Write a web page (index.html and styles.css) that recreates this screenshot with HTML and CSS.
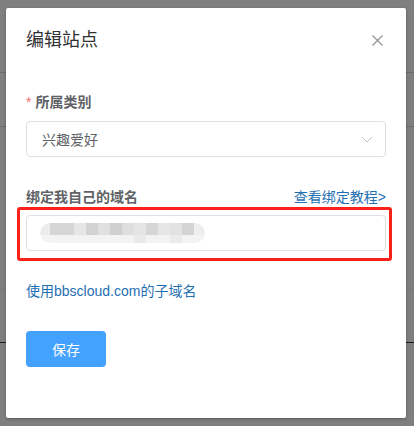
FILE: index.html
```html
<!DOCTYPE html>
<html lang="zh-CN">
<head>
<meta charset="utf-8">
<title>编辑站点</title>
<link rel="stylesheet" href="styles.css">
</head>
<body>
<div class="modal">
  <div class="header">
    <span class="title">编辑站点</span>
    <svg class="close" width="11" height="11" viewBox="0 0 11 11"><path d="M0.5 0.5L10.5 10.5M10.5 0.5L0.5 10.5" stroke="#909399" stroke-width="1.2" fill="none"/></svg>
  </div>
  <div class="body">
    <div class="label"><span class="req">*</span>所属类别</div>
    <div class="select">
      <span class="select-text">兴趣爱好</span>
      <svg class="chev" width="12" height="7" viewBox="0 0 12 7"><polyline points="1,1 6,6 11,1" stroke="#c0c4cc" stroke-width="1" fill="none"/></svg>
    </div>
    <div class="label-row">
      <span class="label2">绑定我自己的域名</span>
      <a class="link" href="#">查看绑定教程&gt;</a>
    </div>
    <div class="domain-wrap">
      <div class="input">
        <div class="mosaic">
          <div class="mrow top"></div>
          <div class="mrow bottom"></div>
        </div>
      </div>
      <div class="annot"></div>
    </div>
    <a class="sub-link" href="#">使用bbscloud.com的子域名</a>
    <button class="save">保存</button>
  </div>
</div>
</body>
</html>
```

FILE: styles.css
```css
html, body {
  height: 100%;
}
body {
  margin: 0;
  font-family: "Liberation Sans", "Noto Sans CJK SC", sans-serif;
  background:
    linear-gradient(#6c6c6c, #6c6c6c) 0 72px / 100% 1px no-repeat,
    linear-gradient(#6c6c6c, #6c6c6c) 0 126px / 100% 1px no-repeat,
    linear-gradient(#777777, #777777) 0 289px / 100% 1px no-repeat,
    linear-gradient(#1e1e1e, #1e1e1e) 0 342px / 100% 1px no-repeat,
    #7f7f7f;
  overflow: hidden;
}
.modal {
  margin: 8px 0 0 6px;
  width: 400px;
  height: 410px;
  background: #fff;
  border-radius: 2px;
  box-shadow: 0 1px 3px rgba(0,0,0,.3);
  box-sizing: border-box;
  padding: 20px 20px 0 20px;
}
.header {
  display: flex;
  justify-content: space-between;
  align-items: center;
  height: 24px;
}
.title {
  font-size: 18px;
  line-height: 24px;
  color: #303133;
}
.close {
  margin-right: 3px;
  margin-top: 1px;
}
.body {
  padding-top: 40px;
}
.label {
  font-size: 14px;
  line-height: 20px;
  color: #606266;
  font-weight: 600;
}
.req {
  color: #f56c6c;
  margin-right: 4px;
  font-weight: 400;
}
.select {
  margin-top: 9px;
  height: 36px;
  border: 1px solid #dcdfe6;
  border-radius: 4px;
  box-sizing: border-box;
  display: flex;
  align-items: center;
  justify-content: space-between;
  padding: 0 12px 0 15px;
}
.select-text {
  font-size: 14px;
  color: #606266;
}
.chev {
  margin-top: 1px;
}
.label-row {
  margin-top: 30px;
  display: flex;
  justify-content: space-between;
  font-size: 14px;
  line-height: 20px;
}
.label2 {
  color: #606266;
  font-weight: 600;
}
.link {
  color: #1f6fb2;
  text-decoration: none;
}
.domain-wrap {
  position: relative;
  margin-top: 8px;
}
.input {
  height: 36px;
  border: 1px solid #dcdfe6;
  border-radius: 4px;
  box-sizing: border-box;
  display: flex;
  align-items: center;
  padding-left: 13px;
}
.mosaic {
  width: 165px;
  height: 20px;
  border-radius: 10px;
  overflow: hidden;
  filter: blur(0.6px);
}
.mrow.top {
  height: 12px;
  background: linear-gradient(to right,
    #ececec 0 10px, #d6d6d6 10px 34px, #e6e6e6 34px 46px, #d2d2d2 46px 58px,
    #e0e0e0 58px 70px, #d0d0d0 70px 82px, #dedede 82px 94px, #e4e4e4 94px 106px,
    #d6d6d6 106px 118px, #e6e6e6 118px 130px, #e2e2e2 130px 142px, #d4d4d4 142px 154px,
    #eeeeee 154px 165px);
}
.mrow.bottom {
  height: 8px;
  background: linear-gradient(to right,
    #f3f3f3 0 94px, #e9e9e9 94px 106px, #f3f3f3 106px 130px, #ebebeb 130px 142px,
    #f3f3f3 142px 165px);
}
.annot {
  position: absolute;
  left: -9px;
  top: -8px;
  right: -6px;
  bottom: -10px;
  border: 3px solid #f8221a;
  border-radius: 3px;
  pointer-events: none;
}
.sub-link {
  display: block;
  margin-top: 30px;
  font-size: 14px;
  line-height: 20px;
  color: #1f6fb2;
  text-decoration: none;
}
.save {
  display: block;
  margin-top: 30px;
  width: 80px;
  height: 36px;
  border: 0;
  border-radius: 4px;
  background: #43a1ff;
  color: #fff;
  font-family: inherit;
  font-size: 14px;
  padding: 0;
}
```
